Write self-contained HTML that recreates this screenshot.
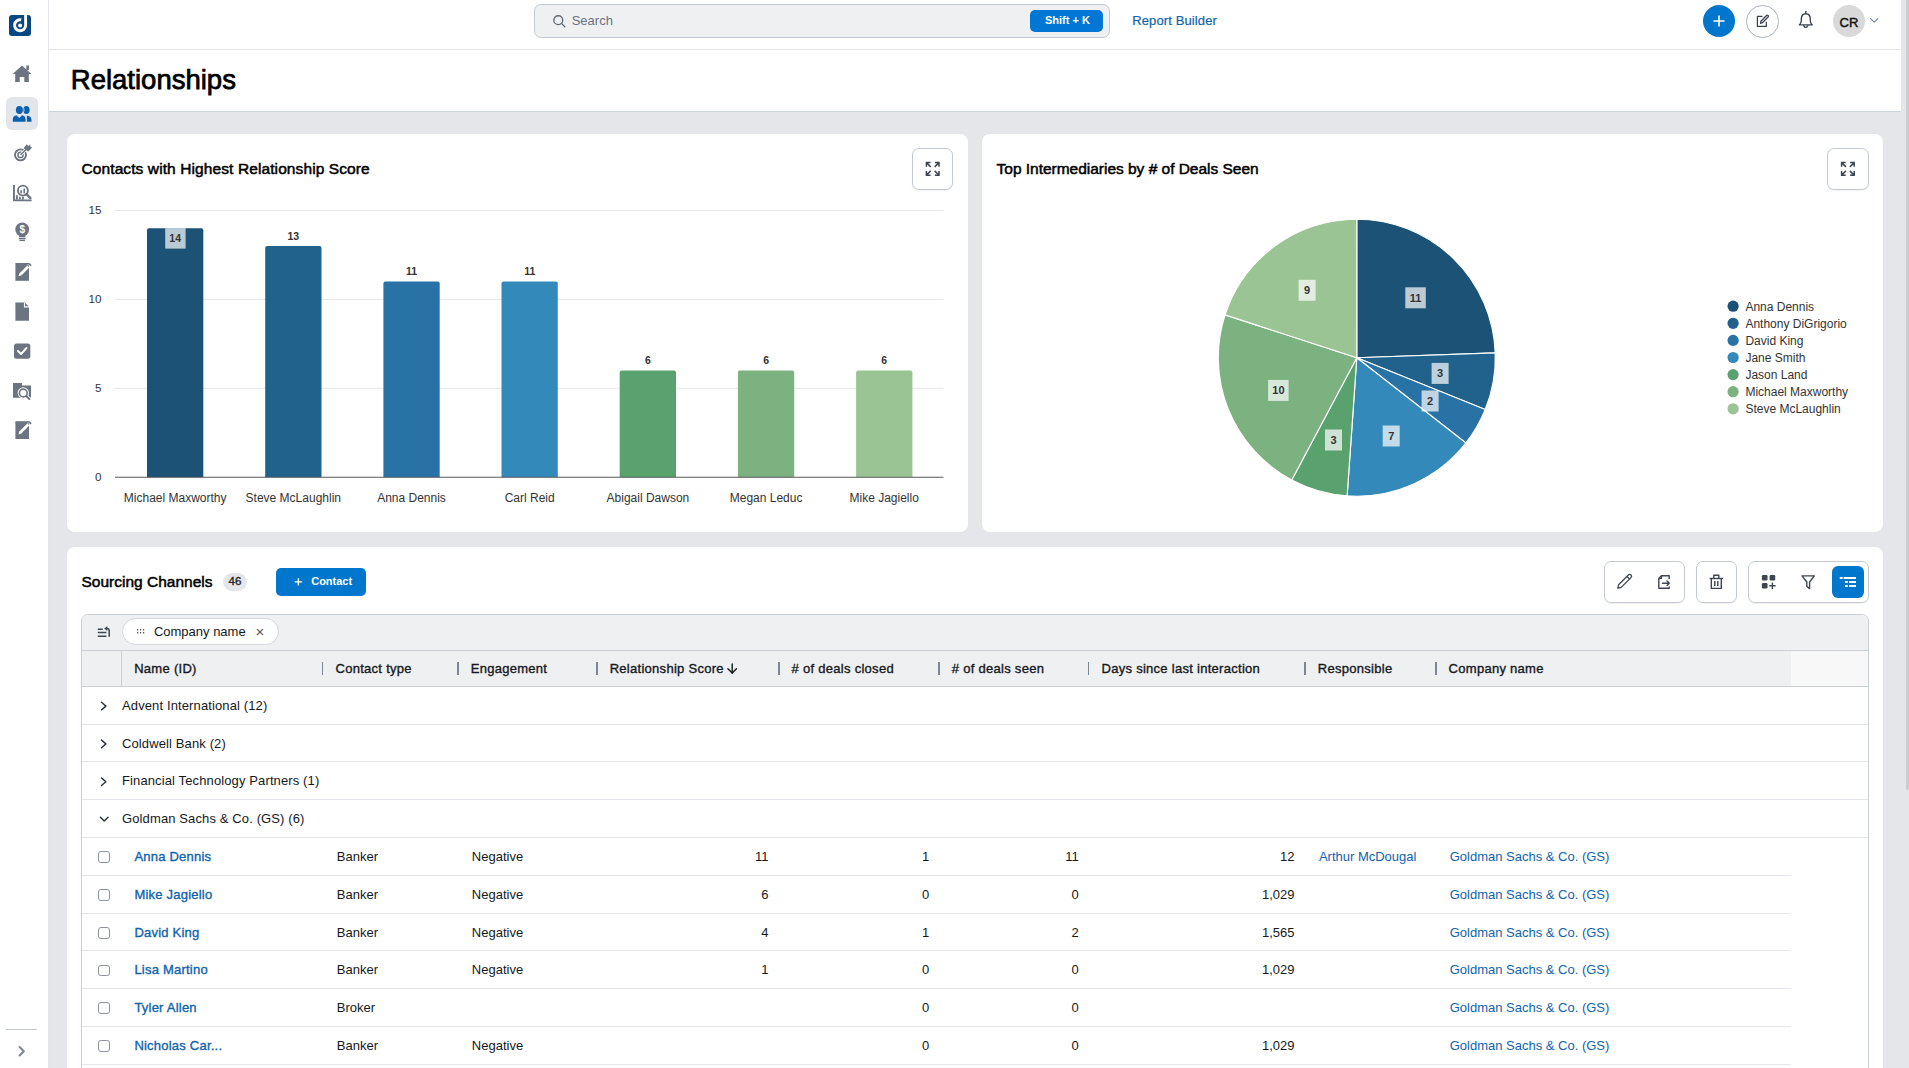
<!DOCTYPE html>
<html><head><meta charset="utf-8"><title>Relationships</title>
<style>
*{box-sizing:border-box;margin:0;padding:0}
html,body{width:1909px;height:1068px;overflow:hidden}
body{background:#e4e6ea;font-family:"Liberation Sans",sans-serif;color:#15181c;position:relative}
.a{position:absolute}
#side{left:0;top:0;width:49px;height:1068px;background:#fff;border-right:1px solid #e3e5e9}
#top{left:49px;top:0;width:1852px;height:50px;background:#fff;border-bottom:1px solid #e3e5e9}
#tbar{left:49px;top:50px;width:1852px;height:62px;background:#fff;border-bottom:1px solid #cdd3da}
#sbtrack{left:1901px;top:0;width:8px;height:1068px;background:#e4e6ea}
#sbthumb{left:1906px;top:0;width:3px;height:790px;background:#cbcdd1;border-radius:0 0 2px 2px}
.card{background:#fff;border-radius:8px}
.t{white-space:nowrap;line-height:1}
svg{position:absolute;left:0;top:0;overflow:visible}
</style></head><body>
<div id="side" class="a"></div><div id="top" class="a"></div><div id="tbar" class="a"></div>
<div id="sbtrack" class="a"></div><div id="sbthumb" class="a"></div>
<div class="a card" style="left:67px;top:134px;width:901px;height:398px"></div>
<div class="a card" style="left:982px;top:134px;width:901px;height:398px"></div>
<div class="a card" style="left:67px;top:547px;width:1816px;height:540px;border-radius:8px 8px 0 0"></div>
<div class="a t" style="left:70.8px;top:65.6px;font-size:27.5px;font-weight:400;letter-spacing:0px;-webkit-text-stroke:0.75px #000;color:#000">Relationships</div>
<div class="a" style="left:534.2px;top:4.3px;width:575.5px;height:33.5px;border:1px solid #c3cad3;border-radius:7px;background:#eff0f2"></div>
<svg width="1909" height="1068"><g fill="none" stroke="#5d6773" stroke-width="1.3"><circle cx="558.3" cy="20.2" r="4.45"/><path d="M561.5,23.4 L564.8,26.7" stroke-linecap="round"/></g></svg>
<div class="a t" style="left:571.7px;top:14px;font-size:13px;color:#6b7280">Search</div>
<div class="a" style="left:1029.9px;top:9.8px;width:73.2px;height:22.2px;border-radius:5px;background:#0077d4"></div>
<div class="a t" style="left:1045px;top:15.2px;font-size:11px;font-weight:700;color:#fff">Shift + K</div>
<div class="a t" style="left:1132.2px;top:13.8px;font-size:13px;color:#0f63ae;-webkit-text-stroke:0.2px #0f63ae;letter-spacing:0.12px">Report Builder</div>
<div class="a" style="left:1703px;top:5px;width:32px;height:32px;border-radius:50%;background:#0077cc"></div>
<svg width="1909" height="1068"><path d="M1719,15.5 V26.5 M1713.5,21 H1724.5" stroke="#fff" stroke-width="1.6"/></svg>
<div class="a" style="left:1746.2px;top:5px;width:32.5px;height:32.5px;border-radius:50%;border:1px solid #a9b2bd;background:#fff"></div>
<svg width="1909" height="1068"><g fill="none" stroke="#3a4350" stroke-width="1.25" stroke-linejoin="round" stroke-linecap="round"><path d="M1761.9,16.4 H1757.4 V26.3 H1766.3 V22.2"/><path d="M1760.5,23.3 L1760.9,21.2 L1766.6,15.5 A1,1 0 0 1 1768.1,17 L1762.4,22.7 Z"/></g></svg>
<svg width="1909" height="1068"><g fill="none" stroke="#3a4350" stroke-width="1.35" stroke-linejoin="round" stroke-linecap="round"><path d="M1799.4,24.9 Q1801.3,23.4 1801.3,20.6 V19.2 Q1801.3,13.7 1805.8,13.7 Q1810.3,13.7 1810.3,19.2 V20.6 Q1810.3,23.4 1812.2,24.9 Z"/><path d="M1803.7,25.6 Q1805.8,29.3 1807.9,25.6"/><path d="M1805.8,11.3 V13.6"/></g></svg>
<div class="a" style="left:1833px;top:5px;width:32px;height:32px;border-radius:50%;background:#d9d9d9"></div>
<div class="a t" style="left:1833px;top:15.5px;width:32px;text-align:center;font-size:13px;font-weight:400;-webkit-text-stroke:0.45px #111;color:#111">CR</div>
<svg width="1909" height="1068"><path d="M1870.6,18.6 L1874.2,22.2 L1877.8,18.6" fill="none" stroke="#7d8a99" stroke-width="1.2" stroke-linecap="round" stroke-linejoin="round"/></svg>
<svg width="49" height="1068"><rect x="9" y="14.9" width="22" height="21.1" rx="3" fill="#084781"/><path d="M25.6,14.9 V25.4 A5.5,5.5 0 1 1 21.2,19.9" fill="none" stroke="#fff" stroke-width="2.9"/><circle cx="20.1" cy="25.4" r="2" fill="#fff"/><path d="M22,65.5 L31.5,74 H28.8 V82 H24.3 V77 H19.7 V82 H15.2 V74 H12.7 Z" fill="#6b7480"/><rect x="26.3" y="65.5" width="2.6" height="4.5" fill="#6b7480"/><rect x="6" y="97" width="32" height="33" rx="6" fill="#e2e5ea"/><ellipse cx="19.4" cy="110" rx="3.5" ry="3.9" fill="#0b61ae"/><ellipse cx="26.4" cy="110" rx="3.2" ry="3.9" fill="#0b61ae"/><path d="M22.9,107 A3.5,3.9 0 0 1 22.9,113" stroke="#e2e5ea" stroke-width="0.6" fill="none"/><path d="M12.8,121.7 V119.5 C12.8,117 14.2,115.5 16.5,115.3 L19.3,118 L22,115.3 C24.3,115.5 25.6,117 25.6,119.5 V121.7 Z" fill="#0b61ae"/><path d="M26.9,115.4 C29.6,115.6 31.5,117.3 31.5,120 V121.7 H26.9 Z" fill="#0b61ae"/><circle cx="20.5" cy="154.9" r="5.5" fill="none" stroke="#6b7480" stroke-width="1.9"/><circle cx="20.5" cy="154.9" r="2.6" fill="none" stroke="#6b7480" stroke-width="1.5"/><path d="M20.5,154.9 L26.5,148.9" stroke="#fff" stroke-width="2.8" stroke-linecap="round"/><path d="M20.5,154.9 L26.5,148.9" stroke="#6b7480" stroke-width="1.4"/><path d="M23.6,148.3 L26.6,144.2 L28.2,146 L30.3,144.4 L30.4,146.8 L32.1,147.3 L30.2,149.7 L28.2,151.6 Z" fill="#6b7480"/><path d="M13,185 H14.9 V199.4 H31.6 V201.2 H13 Z" fill="#6b7480"/><circle cx="22.9" cy="190.6" r="5" fill="none" stroke="#6b7480" stroke-width="1.9"/><path d="M26.5,194.2 L30.4,198.1" stroke="#6b7480" stroke-width="2.4" stroke-linecap="round"/><rect x="20.3" y="190.2" width="1.6" height="3.2" fill="#6b7480"/><rect x="23.4" y="188.6" width="1.6" height="4.8" fill="#6b7480"/><rect x="15.9" y="195.2" width="1.9" height="4.4" fill="#6b7480"/><rect x="18.9" y="196.8" width="1.9" height="2.8" fill="#6b7480"/><rect x="21.9" y="196.8" width="1.9" height="2.8" fill="#6b7480"/><circle cx="22.2" cy="229.5" r="6.9" fill="#6b7480"/><rect x="19" y="236" width="6.4" height="1.3" fill="#6b7480"/><rect x="18.8" y="238" width="6.8" height="1.3" fill="#6b7480"/><rect x="19.5" y="239.8" width="5.4" height="1.3" fill="#6b7480"/><text x="22.2" y="233.3" text-anchor="middle" font-size="10" font-weight="700" fill="#fff">$</text><rect x="15.4" y="263" width="13.6" height="17.8" fill="#6b7480"/><path d="M18.5,276.3 L19.3,273.4 L27.3,265.4 L29.3,267.4 L21.3,275.4 Z" fill="#fff"/><path d="M28.1,264.4 L29.6,262.9 L31.7,265 L30.2,266.5 Z" fill="#6b7480"/><path d="M27.6,265.1 L28.1,264.4 L30.2,266.5 L29.6,267.1" fill="none" stroke="#fff" stroke-width="0.7"/><rect x="15.4" y="421.2" width="13.6" height="17.8" fill="#6b7480"/><path d="M18.5,434.5 L19.3,431.59999999999997 L27.3,423.59999999999997 L29.3,425.59999999999997 L21.3,433.59999999999997 Z" fill="#fff"/><path d="M28.1,422.59999999999997 L29.6,421.09999999999997 L31.7,423.2 L30.2,424.7 Z" fill="#6b7480"/><path d="M27.6,423.3 L28.1,422.59999999999997 L30.2,424.7 L29.6,425.3" fill="none" stroke="#fff" stroke-width="0.7"/><path d="M15.4,302.5 H24.8 L29,306.7 V320.8 H15.4 Z" fill="#6b7480"/><path d="M24.5,302.8 V306.9 H29" fill="none" stroke="#fff" stroke-width="1.1"/><rect x="14" y="343.4" width="16.3" height="15.3" rx="2.5" fill="#6b7480"/><path d="M18,351 L21,354 L26.5,348" fill="none" stroke="#fff" stroke-width="1.9" stroke-linecap="round" stroke-linejoin="round"/><path d="M13,383 H22 V385.6 H31 V397.7 H13 Z" fill="#6b7480"/><circle cx="23.3" cy="393" r="5.7" fill="#fff"/><path d="M26.6,396.3 L29.6,399.3" stroke="#fff" stroke-width="3.8" stroke-linecap="round"/><circle cx="23.3" cy="393" r="3.9" fill="#fff" stroke="#6b7480" stroke-width="1.6"/><path d="M26.3,396 L29.4,399.1" stroke="#6b7480" stroke-width="2" stroke-linecap="round"/><rect x="6" y="1029" width="31" height="1" fill="#c0c6cd"/><path d="M19.6,1047 L23.8,1051.2 L19.6,1055.4" fill="none" stroke="#7d8995" stroke-width="2.1" stroke-linecap="round" stroke-linejoin="round"/></svg>
<svg width="1909" height="1068"><line x1="115.0" x2="943.5" y1="210.4" y2="210.4" stroke="#e6e6e6" stroke-width="1"/><line x1="115.0" x2="943.5" y1="299.4" y2="299.4" stroke="#e6e6e6" stroke-width="1"/><line x1="115.0" x2="943.5" y1="388.3" y2="388.3" stroke="#e6e6e6" stroke-width="1"/><path d="M147.0,477.3 V230.2 Q147.0,228.2 149.0,228.2 H201.3 Q203.3,228.2 203.3,230.2 V477.3 Z" fill="#1b5276"/><rect x="165.2" y="228.2" width="20.4" height="20.4" fill="#fff" fill-opacity="0.7"/><text x="175.2" y="242.0" text-anchor="middle" font-size="10.5" font-weight="700" fill="#333">14</text><text x="175.2" y="502.1" text-anchor="middle" font-size="12" fill="#333">Michael Maxworthy</text><path d="M265.2,477.3 V248.0 Q265.2,246.0 267.2,246.0 H319.5 Q321.5,246.0 321.5,248.0 V477.3 Z" fill="#21628c"/><text x="293.3" y="239.6" text-anchor="middle" font-size="10.5" font-weight="700" fill="#333">13</text><text x="293.3" y="502.1" text-anchor="middle" font-size="12" fill="#333">Steve McLaughlin</text><path d="M383.4,477.3 V283.6 Q383.4,281.6 385.4,281.6 H437.7 Q439.7,281.6 439.7,283.6 V477.3 Z" fill="#2872a6"/><text x="411.5" y="275.2" text-anchor="middle" font-size="10.5" font-weight="700" fill="#333">11</text><text x="411.5" y="502.1" text-anchor="middle" font-size="12" fill="#333">Anna Dennis</text><path d="M501.5,477.3 V283.6 Q501.5,281.6 503.5,281.6 H555.8 Q557.8,281.6 557.8,283.6 V477.3 Z" fill="#3389b9"/><text x="529.7" y="275.2" text-anchor="middle" font-size="10.5" font-weight="700" fill="#333">11</text><text x="529.7" y="502.1" text-anchor="middle" font-size="12" fill="#333">Carl Reid</text><path d="M619.7,477.3 V372.5 Q619.7,370.5 621.7,370.5 H674.0 Q676.0,370.5 676.0,372.5 V477.3 Z" fill="#5aa26d"/><text x="647.9" y="364.1" text-anchor="middle" font-size="10.5" font-weight="700" fill="#333">6</text><text x="647.9" y="502.1" text-anchor="middle" font-size="12" fill="#333">Abigail Dawson</text><path d="M737.9,477.3 V372.5 Q737.9,370.5 739.9,370.5 H792.2 Q794.2,370.5 794.2,372.5 V477.3 Z" fill="#7bb27f"/><text x="766.1" y="364.1" text-anchor="middle" font-size="10.5" font-weight="700" fill="#333">6</text><text x="766.1" y="502.1" text-anchor="middle" font-size="12" fill="#333">Megan Leduc</text><path d="M856.1,477.3 V372.5 Q856.1,370.5 858.1,370.5 H910.4 Q912.4,370.5 912.4,372.5 V477.3 Z" fill="#9bc494"/><text x="884.2" y="364.1" text-anchor="middle" font-size="10.5" font-weight="700" fill="#333">6</text><text x="884.2" y="502.1" text-anchor="middle" font-size="12" fill="#333">Mike Jagiello</text><line x1="115.0" x2="943.5" y1="477.3" y2="477.3" stroke="#5a5a5a" stroke-width="1.1"/><text x="101.5" y="481.2" text-anchor="end" font-size="11.6" fill="#333">0</text><text x="101.5" y="392.2" text-anchor="end" font-size="11.6" fill="#333">5</text><text x="101.5" y="303.3" text-anchor="end" font-size="11.6" fill="#333">10</text><text x="101.5" y="214.3" text-anchor="end" font-size="11.6" fill="#333">15</text></svg>
<div class="a t" style="left:81.5px;top:160.8px;font-size:15.5px;font-weight:400;-webkit-text-stroke:0.5px #000;letter-spacing:0.1px;color:#000">Contacts with Highest Relationship Score</div>
<div class="a t" style="left:996.6px;top:160.8px;font-size:15.5px;font-weight:400;-webkit-text-stroke:0.5px #000;letter-spacing:-0.02px;color:#000">Top Intermediaries by # of Deals Seen</div>
<div class="a" style="left:911.9px;top:148px;width:41.6px;height:41.9px;border:1px solid #c3cad3;border-radius:7px;background:#fff;box-shadow:0 1px 2px rgba(0,0,0,0.06)"></div>
<div class="a" style="left:1827px;top:148px;width:41.6px;height:41.9px;border:1px solid #c3cad3;border-radius:7px;background:#fff;box-shadow:0 1px 2px rgba(0,0,0,0.06)"></div>
<svg width="1909" height="1068"><path d="M1356.8,357.7 L1356.80,219.20 A138.5,138.5 0 0 1 1495.22,352.87 Z" fill="#1b5276" stroke="#fff" stroke-width="1.15" stroke-linejoin="round"/><path d="M1356.8,357.7 L1495.22,352.87 A138.5,138.5 0 0 1 1485.21,409.58 Z" fill="#21628c" stroke="#fff" stroke-width="1.15" stroke-linejoin="round"/><path d="M1356.8,357.7 L1485.21,409.58 A138.5,138.5 0 0 1 1465.94,442.97 Z" fill="#2872a6" stroke="#fff" stroke-width="1.15" stroke-linejoin="round"/><path d="M1356.8,357.7 L1465.94,442.97 A138.5,138.5 0 0 1 1347.14,495.86 Z" fill="#3389b9" stroke="#fff" stroke-width="1.15" stroke-linejoin="round"/><path d="M1356.8,357.7 L1347.14,495.86 A138.5,138.5 0 0 1 1291.78,479.99 Z" fill="#5aa26d" stroke="#fff" stroke-width="1.15" stroke-linejoin="round"/><path d="M1356.8,357.7 L1291.78,479.99 A138.5,138.5 0 0 1 1225.08,314.90 Z" fill="#7bb27f" stroke="#fff" stroke-width="1.15" stroke-linejoin="round"/><path d="M1356.8,357.7 L1225.08,314.90 A138.5,138.5 0 0 1 1356.80,219.20 Z" fill="#9bc494" stroke="#fff" stroke-width="1.15" stroke-linejoin="round"/><rect x="1405.3" y="287.3" width="20.5" height="21" fill="#fff" fill-opacity="0.7"/><text x="1415.6" y="301.8" text-anchor="middle" font-size="11" font-weight="700" fill="#333">11</text><rect x="1431.6" y="362.9" width="17" height="21" fill="#fff" fill-opacity="0.7"/><text x="1440.1" y="377.4" text-anchor="middle" font-size="11" font-weight="700" fill="#333">3</text><rect x="1421.6" y="390.5" width="17" height="21" fill="#fff" fill-opacity="0.7"/><text x="1430.1" y="405.0" text-anchor="middle" font-size="11" font-weight="700" fill="#333">2</text><rect x="1382.7" y="425.5" width="17" height="21" fill="#fff" fill-opacity="0.7"/><text x="1391.2" y="440.0" text-anchor="middle" font-size="11" font-weight="700" fill="#333">7</text><rect x="1325.0" y="429.5" width="17" height="21" fill="#fff" fill-opacity="0.7"/><text x="1333.5" y="444.0" text-anchor="middle" font-size="11" font-weight="700" fill="#333">3</text><rect x="1268.1" y="379.9" width="20.5" height="21" fill="#fff" fill-opacity="0.7"/><text x="1278.4" y="394.4" text-anchor="middle" font-size="11" font-weight="700" fill="#333">10</text><rect x="1298.6" y="279.8" width="17" height="21" fill="#fff" fill-opacity="0.7"/><text x="1307.1" y="294.3" text-anchor="middle" font-size="11" font-weight="700" fill="#333">9</text><circle cx="1733.1" cy="306.2" r="5.6" fill="#1b5276"/><text x="1745.4" y="310.7" font-size="12" fill="#333">Anna Dennis</text><circle cx="1733.1" cy="323.3" r="5.6" fill="#21628c"/><text x="1745.4" y="327.8" font-size="12" fill="#333">Anthony DiGrigorio</text><circle cx="1733.1" cy="340.4" r="5.6" fill="#2872a6"/><text x="1745.4" y="344.9" font-size="12" fill="#333">David King</text><circle cx="1733.1" cy="357.5" r="5.6" fill="#3389b9"/><text x="1745.4" y="362.0" font-size="12" fill="#333">Jane Smith</text><circle cx="1733.1" cy="374.6" r="5.6" fill="#5aa26d"/><text x="1745.4" y="379.1" font-size="12" fill="#333">Jason Land</text><circle cx="1733.1" cy="391.7" r="5.6" fill="#7bb27f"/><text x="1745.4" y="396.2" font-size="12" fill="#333">Michael Maxworthy</text><circle cx="1733.1" cy="408.8" r="5.6" fill="#9bc494"/><text x="1745.4" y="413.3" font-size="12" fill="#333">Steve McLaughlin</text></svg>
<div class="a t" style="left:81.5px;top:574.1px;font-size:15.5px;font-weight:400;-webkit-text-stroke:0.5px #000;color:#000">Sourcing Channels</div>
<div class="a t" style="left:223px;top:573.3px;width:24px;height:17.5px;border-radius:9px;background:#e4e6ea;font-size:11.5px;font-weight:400;-webkit-text-stroke:0.35px #222;color:#222;text-align:center;line-height:17.5px">46</div>
<div class="a" style="left:276px;top:568px;width:90px;height:28px;border-radius:5px;background:#0077cc"></div>
<svg width="1909" height="1068"><path d="M298.4,578.2 V585.6 M294.7,581.9 H302.1" stroke="#fff" stroke-width="1.4"/></svg>
<div class="a t" style="left:311.2px;top:575.9px;font-size:11px;font-weight:700;color:#fff">Contact</div>
<div class="a" style="left:1604.2px;top:561px;width:80.9px;height:42px;border:1px solid #c3cad3;border-radius:7px;box-shadow:0 1px 1px rgba(0,0,0,0.06)"></div>
<div class="a" style="left:1696px;top:561px;width:41px;height:42px;border:1px solid #c3cad3;border-radius:7px;box-shadow:0 1px 1px rgba(0,0,0,0.06)"></div>
<div class="a" style="left:1748px;top:561px;width:121px;height:42px;border:1px solid #c3cad3;border-radius:7px;box-shadow:0 1px 1px rgba(0,0,0,0.06)"></div>
<div class="a" style="left:1832px;top:566px;width:32px;height:32px;border-radius:6px;background:#0077cc"></div>
<div class="a" style="left:81px;top:614px;width:1787.6px;height:500px;border:1px solid #c9cfd7;border-radius:7px 7px 0 0;background:#fff;overflow:hidden"><div class="a" style="left:0;top:0;width:100%;height:35.8px;background:#eff0f2;border-bottom:1px solid #c9cfd7"></div><div class="a" style="left:0;top:35.8px;width:1708.8px;height:36.1px;background:#eff0f2;border-bottom:1px solid #c9cfd7"></div><div class="a" style="left:1708.8px;top:35.8px;width:100px;height:36.1px;background:#f8f8f9;border-bottom:1px solid #c9cfd7"></div><div class="a" style="left:39.400000000000006px;top:35.8px;width:1px;height:36px;background:#c9cfd7"></div></div>
<div class="a" style="left:121.9px;top:618.2px;width:157.3px;height:27.2px;border:1px solid #d3d8de;border-radius:14px;background:#fff"></div>
<div class="a t" style="left:153.9px;top:624.5px;font-size:13px;color:#15181c">Company name</div>
<div class="a t" style="left:255.5px;top:623.5px;font-size:15px;color:#555">&#215;</div>
<div class="a t" style="left:134.2px;top:662px;font-size:13px;font-weight:400;letter-spacing:0.28px;-webkit-text-stroke:0.35px #15181c;color:#15181c">Name (ID)</div>
<div class="a t" style="left:335.5px;top:662px;font-size:13px;font-weight:400;letter-spacing:0.28px;-webkit-text-stroke:0.35px #15181c;color:#15181c">Contact type</div>
<div class="a t" style="left:470.7px;top:662px;font-size:13px;font-weight:400;letter-spacing:0.28px;-webkit-text-stroke:0.35px #15181c;color:#15181c">Engagement</div>
<div class="a t" style="left:609.7px;top:662px;font-size:13px;font-weight:400;letter-spacing:0.28px;-webkit-text-stroke:0.35px #15181c;color:#15181c">Relationship Score</div>
<div class="a t" style="left:791.6px;top:662px;font-size:13px;font-weight:400;letter-spacing:0.28px;-webkit-text-stroke:0.35px #15181c;color:#15181c"># of deals closed</div>
<div class="a t" style="left:951.8px;top:662px;font-size:13px;font-weight:400;letter-spacing:0.28px;-webkit-text-stroke:0.35px #15181c;color:#15181c"># of deals seen</div>
<div class="a t" style="left:1101.5px;top:662px;font-size:13px;font-weight:400;letter-spacing:0.28px;-webkit-text-stroke:0.35px #15181c;color:#15181c">Days since last interaction</div>
<div class="a t" style="left:1317.8px;top:662px;font-size:13px;font-weight:400;letter-spacing:0.28px;-webkit-text-stroke:0.35px #15181c;color:#15181c">Responsible</div>
<div class="a t" style="left:1448.6px;top:662px;font-size:13px;font-weight:400;letter-spacing:0.28px;-webkit-text-stroke:0.35px #15181c;color:#15181c">Company name</div>
<div class="a" style="left:321.8px;top:662px;width:1.7px;height:13px;background:#7d8793"></div>
<div class="a" style="left:457.0px;top:662px;width:1.7px;height:13px;background:#7d8793"></div>
<div class="a" style="left:596.0px;top:662px;width:1.7px;height:13px;background:#7d8793"></div>
<div class="a" style="left:777.9px;top:662px;width:1.7px;height:13px;background:#7d8793"></div>
<div class="a" style="left:938.1px;top:662px;width:1.7px;height:13px;background:#7d8793"></div>
<div class="a" style="left:1087.8px;top:662px;width:1.7px;height:13px;background:#7d8793"></div>
<div class="a" style="left:1304.1px;top:662px;width:1.7px;height:13px;background:#7d8793"></div>
<div class="a" style="left:1434.9px;top:662px;width:1.7px;height:13px;background:#7d8793"></div>
<div class="a" style="left:82px;top:723.6px;width:1785.6px;height:1px;background:#e3e6ea"></div>
<div class="a t" style="left:122px;top:698.8px;font-size:13px;letter-spacing:0.12px;color:#15181c">Advent International (12)</div>
<div class="a" style="left:82px;top:761.4px;width:1785.6px;height:1px;background:#e3e6ea"></div>
<div class="a t" style="left:122px;top:736.6px;font-size:13px;letter-spacing:0.12px;color:#15181c">Coldwell Bank (2)</div>
<div class="a" style="left:82px;top:799.2px;width:1785.6px;height:1px;background:#e3e6ea"></div>
<div class="a t" style="left:122px;top:774.4px;font-size:13px;letter-spacing:0.12px;color:#15181c">Financial Technology Partners (1)</div>
<div class="a" style="left:82px;top:837.0px;width:1785.6px;height:1px;background:#e3e6ea"></div>
<div class="a t" style="left:122px;top:812.2px;font-size:13px;letter-spacing:0.12px;color:#15181c">Goldman Sachs &amp; Co. (GS) (6)</div>
<div class="a" style="left:82px;top:874.8px;width:1709px;height:1px;background:#e3e6ea"></div>
<div class="a" style="left:98.2px;top:851.2px;width:11.8px;height:11.8px;border:1px solid #8a939e;border-radius:3px;background:#fff"></div>
<div class="a t" style="left:134.4px;top:850.0px;font-size:13px;letter-spacing:0.22px;color:#0f63ae;-webkit-text-stroke:0.35px #0f63ae">Anna Dennis</div>
<div class="a t" style="left:336.8px;top:850.0px;font-size:13px;color:#15181c">Banker</div>
<div class="a t" style="left:471.8px;top:850.0px;font-size:13px;color:#15181c">Negative</div>
<div class="a t" style="left:568.5px;width:200px;text-align:right;top:850.0px;font-size:13px;color:#15181c">11</div>
<div class="a t" style="left:729.3px;width:200px;text-align:right;top:850.0px;font-size:13px;color:#15181c">1</div>
<div class="a t" style="left:878.7px;width:200px;text-align:right;top:850.0px;font-size:13px;color:#15181c">11</div>
<div class="a t" style="left:1094.5px;width:200px;text-align:right;top:850.0px;font-size:13px;color:#15181c">12</div>
<div class="a t" style="left:1318.9px;top:850.0px;font-size:13px;color:#0f63ae">Arthur McDougal</div>
<div class="a t" style="left:1449.7px;top:850.0px;font-size:13px;color:#0f63ae">Goldman Sachs &amp; Co. (GS)</div>
<div class="a" style="left:82px;top:912.6px;width:1709px;height:1px;background:#e3e6ea"></div>
<div class="a" style="left:98.2px;top:889.0px;width:11.8px;height:11.8px;border:1px solid #8a939e;border-radius:3px;background:#fff"></div>
<div class="a t" style="left:134.4px;top:887.8px;font-size:13px;letter-spacing:0.22px;color:#0f63ae;-webkit-text-stroke:0.35px #0f63ae">Mike Jagiello</div>
<div class="a t" style="left:336.8px;top:887.8px;font-size:13px;color:#15181c">Banker</div>
<div class="a t" style="left:471.8px;top:887.8px;font-size:13px;color:#15181c">Negative</div>
<div class="a t" style="left:568.5px;width:200px;text-align:right;top:887.8px;font-size:13px;color:#15181c">6</div>
<div class="a t" style="left:729.3px;width:200px;text-align:right;top:887.8px;font-size:13px;color:#15181c">0</div>
<div class="a t" style="left:878.7px;width:200px;text-align:right;top:887.8px;font-size:13px;color:#15181c">0</div>
<div class="a t" style="left:1094.5px;width:200px;text-align:right;top:887.8px;font-size:13px;color:#15181c">1,029</div>
<div class="a t" style="left:1449.7px;top:887.8px;font-size:13px;color:#0f63ae">Goldman Sachs &amp; Co. (GS)</div>
<div class="a" style="left:82px;top:950.4px;width:1709px;height:1px;background:#e3e6ea"></div>
<div class="a" style="left:98.2px;top:926.8px;width:11.8px;height:11.8px;border:1px solid #8a939e;border-radius:3px;background:#fff"></div>
<div class="a t" style="left:134.4px;top:925.6px;font-size:13px;letter-spacing:0.22px;color:#0f63ae;-webkit-text-stroke:0.35px #0f63ae">David King</div>
<div class="a t" style="left:336.8px;top:925.6px;font-size:13px;color:#15181c">Banker</div>
<div class="a t" style="left:471.8px;top:925.6px;font-size:13px;color:#15181c">Negative</div>
<div class="a t" style="left:568.5px;width:200px;text-align:right;top:925.6px;font-size:13px;color:#15181c">4</div>
<div class="a t" style="left:729.3px;width:200px;text-align:right;top:925.6px;font-size:13px;color:#15181c">1</div>
<div class="a t" style="left:878.7px;width:200px;text-align:right;top:925.6px;font-size:13px;color:#15181c">2</div>
<div class="a t" style="left:1094.5px;width:200px;text-align:right;top:925.6px;font-size:13px;color:#15181c">1,565</div>
<div class="a t" style="left:1449.7px;top:925.6px;font-size:13px;color:#0f63ae">Goldman Sachs &amp; Co. (GS)</div>
<div class="a" style="left:82px;top:988.2px;width:1709px;height:1px;background:#e3e6ea"></div>
<div class="a" style="left:98.2px;top:964.6px;width:11.8px;height:11.8px;border:1px solid #8a939e;border-radius:3px;background:#fff"></div>
<div class="a t" style="left:134.4px;top:963.4px;font-size:13px;letter-spacing:0.22px;color:#0f63ae;-webkit-text-stroke:0.35px #0f63ae">Lisa Martino</div>
<div class="a t" style="left:336.8px;top:963.4px;font-size:13px;color:#15181c">Banker</div>
<div class="a t" style="left:471.8px;top:963.4px;font-size:13px;color:#15181c">Negative</div>
<div class="a t" style="left:568.5px;width:200px;text-align:right;top:963.4px;font-size:13px;color:#15181c">1</div>
<div class="a t" style="left:729.3px;width:200px;text-align:right;top:963.4px;font-size:13px;color:#15181c">0</div>
<div class="a t" style="left:878.7px;width:200px;text-align:right;top:963.4px;font-size:13px;color:#15181c">0</div>
<div class="a t" style="left:1094.5px;width:200px;text-align:right;top:963.4px;font-size:13px;color:#15181c">1,029</div>
<div class="a t" style="left:1449.7px;top:963.4px;font-size:13px;color:#0f63ae">Goldman Sachs &amp; Co. (GS)</div>
<div class="a" style="left:82px;top:1026.0px;width:1709px;height:1px;background:#e3e6ea"></div>
<div class="a" style="left:98.2px;top:1002.4px;width:11.8px;height:11.8px;border:1px solid #8a939e;border-radius:3px;background:#fff"></div>
<div class="a t" style="left:134.4px;top:1001.2px;font-size:13px;letter-spacing:0.22px;color:#0f63ae;-webkit-text-stroke:0.35px #0f63ae">Tyler Allen</div>
<div class="a t" style="left:336.8px;top:1001.2px;font-size:13px;color:#15181c">Broker</div>
<div class="a t" style="left:471.8px;top:1001.2px;font-size:13px;color:#15181c"></div>
<div class="a t" style="left:729.3px;width:200px;text-align:right;top:1001.2px;font-size:13px;color:#15181c">0</div>
<div class="a t" style="left:878.7px;width:200px;text-align:right;top:1001.2px;font-size:13px;color:#15181c">0</div>
<div class="a t" style="left:1449.7px;top:1001.2px;font-size:13px;color:#0f63ae">Goldman Sachs &amp; Co. (GS)</div>
<div class="a" style="left:82px;top:1063.8px;width:1709px;height:1px;background:#e3e6ea"></div>
<div class="a" style="left:98.2px;top:1040.2px;width:11.8px;height:11.8px;border:1px solid #8a939e;border-radius:3px;background:#fff"></div>
<div class="a t" style="left:134.4px;top:1039.0px;font-size:13px;letter-spacing:0.22px;color:#0f63ae;-webkit-text-stroke:0.35px #0f63ae">Nicholas Car...</div>
<div class="a t" style="left:336.8px;top:1039.0px;font-size:13px;color:#15181c">Banker</div>
<div class="a t" style="left:471.8px;top:1039.0px;font-size:13px;color:#15181c">Negative</div>
<div class="a t" style="left:729.3px;width:200px;text-align:right;top:1039.0px;font-size:13px;color:#15181c">0</div>
<div class="a t" style="left:878.7px;width:200px;text-align:right;top:1039.0px;font-size:13px;color:#15181c">0</div>
<div class="a t" style="left:1094.5px;width:200px;text-align:right;top:1039.0px;font-size:13px;color:#15181c">1,029</div>
<div class="a t" style="left:1449.7px;top:1039.0px;font-size:13px;color:#0f63ae">Goldman Sachs &amp; Co. (GS)</div>
<svg width="1909" height="1068"><g fill="none" stroke="#3d4652" stroke-width="1.5"><path d="M926.4000000000001,166.70000000000002 V162.6 H930.5 M926.4000000000001,162.6 L930.7,166.9"/><path d="M939.0,166.70000000000002 V162.6 H934.9000000000001 M939.0,162.6 L934.7,166.9"/><path d="M926.4000000000001,171.1 V175.20000000000002 H930.5 M926.4000000000001,175.20000000000002 L930.7,170.9"/><path d="M939.0,171.1 V175.20000000000002 H934.9000000000001 M939.0,175.20000000000002 L934.7,170.9"/></g><g fill="none" stroke="#3d4652" stroke-width="1.5"><path d="M1841.6000000000001,166.70000000000002 V162.6 H1845.7 M1841.6000000000001,162.6 L1845.9,166.9"/><path d="M1854.2,166.70000000000002 V162.6 H1850.1000000000001 M1854.2,162.6 L1849.9,166.9"/><path d="M1841.6000000000001,171.1 V175.20000000000002 H1845.7 M1841.6000000000001,175.20000000000002 L1845.9,170.9"/><path d="M1854.2,171.1 V175.20000000000002 H1850.1000000000001 M1854.2,175.20000000000002 L1849.9,170.9"/></g><g fill="none" stroke="#3d4652" stroke-width="1.3" stroke-linejoin="round"><path d="M1617.8,588.2 L1618.6,584.8 L1628.4,575 A1.5,1.5 0 0 1 1631,577.6 L1621.2,587.4 Z"/><path d="M1627,576.5 L1629.5,579"/></g><g fill="none" stroke="#3d4652" stroke-width="1.4" stroke-linejoin="round"><path d="M1669.2,579 V575.7 H1661.5 L1658.8,578.4 V588.3 H1669.2 V586.5"/><path d="M1658.8,578.4 H1661.5 V575.7"/><path d="M1662.5,583.3 H1669.3 M1667,581 L1669.3,583.3 L1667,585.6" stroke-linecap="round"/></g><g fill="none" stroke="#3d4652" stroke-width="1.4" stroke-linejoin="round"><path d="M1709.6,578.5 H1723"/><path d="M1713.8,578.3 V575.2 H1718.8 V578.3"/><path d="M1711.3,578.5 V588.4 H1721.3 V578.5"/><path d="M1714.8,581 V586 M1717.8,581 V586"/></g><g fill="#3d4652"><rect x="1761.9" y="575" width="5.6" height="5.6" rx="1.3"/><rect x="1769.6" y="575" width="5.6" height="5.6" rx="1.3"/><rect x="1761.9" y="582.9" width="5.6" height="5.6" rx="1.3"/></g><path d="M1772.4,582.6 V589 M1769.2,585.8 H1775.6" stroke="#3d4652" stroke-width="1.4"/><path d="M1802,575.9 H1814.4 L1809.6,582 V588.6 L1806.8,586.5 V582 Z" fill="none" stroke="#3d4652" stroke-width="1.4" stroke-linejoin="round"/><g fill="#fff"><rect x="1839.8" y="577" width="2.8" height="2"/><rect x="1843.6" y="577" width="12.4" height="2"/><rect x="1845" y="581" width="2.8" height="2"/><rect x="1849.2" y="581" width="6.8" height="2"/><rect x="1845" y="585" width="2.8" height="2"/><rect x="1849.2" y="585" width="6.8" height="2"/></g><g stroke="#3d4652" stroke-width="1.5" fill="none"><path d="M97.8,629.2 H102.8 M97.8,632.6 H106.4 M97.8,636.2 H106.4"/><path d="M109.2,636.8 V630.8 Q109.2,628.6 107,628.6 H106.6"/></g><path d="M104.2,628.6 L107.3,626.2 L107.3,631 Z" fill="#3d4652"/><g></g><rect x="136.95" y="629.15" width="1.3" height="1.3" fill="#3d4652"/><rect x="136.95" y="632.15" width="1.3" height="1.3" fill="#3d4652"/><rect x="139.95" y="629.15" width="1.3" height="1.3" fill="#3d4652"/><rect x="139.95" y="632.15" width="1.3" height="1.3" fill="#3d4652"/><rect x="142.95" y="629.15" width="1.3" height="1.3" fill="#3d4652"/><rect x="142.95" y="632.15" width="1.3" height="1.3" fill="#3d4652"/><path d="M101.5,702.3000000000001 L105.9,706.1 L101.5,709.9" fill="none" stroke="#2b333d" stroke-width="1.4" stroke-linecap="round" stroke-linejoin="round"/><path d="M101.5,740.1 L105.9,743.9 L101.5,747.6999999999999" fill="none" stroke="#2b333d" stroke-width="1.4" stroke-linecap="round" stroke-linejoin="round"/><path d="M101.5,777.9000000000001 L105.9,781.7 L101.5,785.5" fill="none" stroke="#2b333d" stroke-width="1.4" stroke-linecap="round" stroke-linejoin="round"/><path d="M100.4,817.2 L104.2,821 L108,817.2" fill="none" stroke="#2b333d" stroke-width="1.4" stroke-linecap="round" stroke-linejoin="round"/><g fill="none" stroke="#15181c" stroke-width="1.4" stroke-linecap="round" stroke-linejoin="round"><path d="M732.2,664 V673"/><path d="M727.9,668.8 L732.2,673.1 L736.5,668.8"/></g></svg>
</body></html>
